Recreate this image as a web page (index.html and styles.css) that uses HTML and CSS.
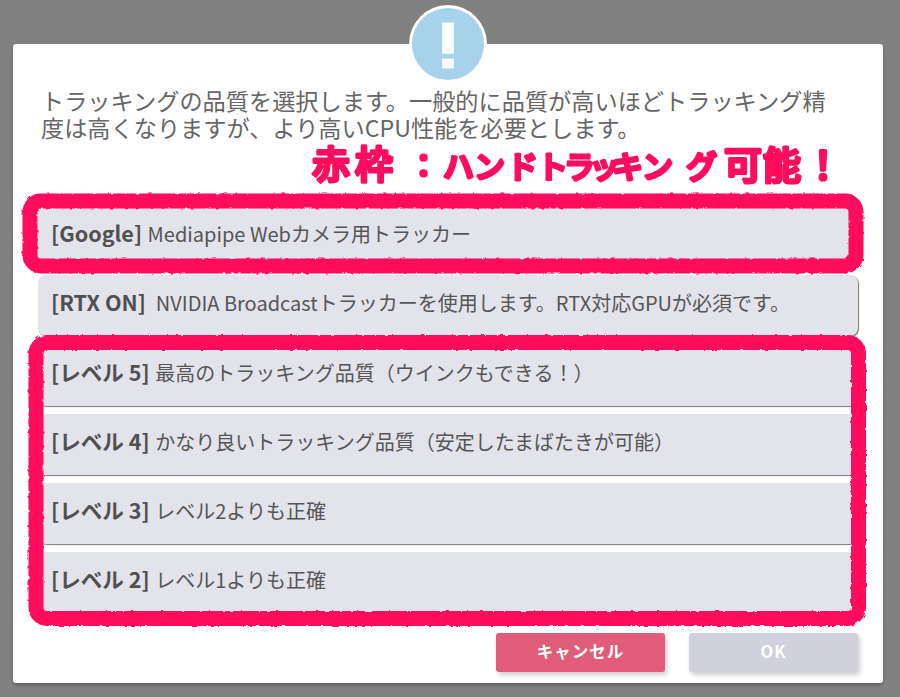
FILE: index.html
```html
<!DOCTYPE html>
<html lang="ja">
<head>
<meta charset="utf-8">
<title>トラッキング品質</title>
<link rel="stylesheet" href="styles.css">
</head>
<body>
<main class="dialog">
  <div class="badge"><svg class="badge-icon" viewBox="0 0 80 80" aria-hidden="true"><circle cx="40" cy="40" r="37" fill="#a6d2ec"/><rect x="34" y="18" width="12" height="32" fill="#fff"/><rect x="34" y="55" width="12" height="10" fill="#fff"/></svg></div>
  <p class="message">トラッキングの品質を選択します。一般的に品質が高いほどトラッキング精度は高くなりますが、より高いCPU性能を必要とします。</p>
  <div class="options">
    <div class="option"><b>[Google]</b> Mediapipe Webカメラ用トラッカー</div>
    <div class="option"><b>[RTX ON]</b>&nbsp; NVIDIA Broadcastトラッカーを使用します。RTX対応GPUが必須です。</div>
    <div class="option"><b>[レベル 5]</b> 最高のトラッキング品質（ウインクもできる！）</div>
    <div class="option"><b>[レベル 4]</b> かなり良いトラッキング品質（安定したまばたきが可能）</div>
    <div class="option"><b>[レベル 3]</b> レベル2よりも正確</div>
    <div class="option"><b>[レベル 2]</b> レベル1よりも正確</div>
  </div>
  <div class="actions">
    <button class="btn btn-cancel">キャンセル</button>
    <button class="btn btn-ok">OK</button>
  </div>
</main>
<svg class="marks" width="900" height="697" viewBox="0 0 900 697" aria-hidden="true">
  <defs>
    <filter id="rough" x="-5%" y="-5%" width="110%" height="110%">
      <feTurbulence type="fractalNoise" baseFrequency="0.2" numOctaves="2" seed="4" result="n"/>
      <feDisplacementMap in="SourceGraphic" in2="n" scale="3"/>
      <feGaussianBlur stdDeviation="0.6"/>
    </filter>
    <filter id="soft"><feGaussianBlur stdDeviation="0.6"/></filter>
  </defs>
  <g class="frames" filter="url(#rough)">
    <rect x="30" y="201" width="826" height="65" rx="11"/>
    <rect x="36" y="342.5" width="822.5" height="276" rx="11"/>
  </g>
  <g filter="url(#soft)">
    <text class="note-big" x="312 355" y="178">赤枠</text>
    <text class="note-kana" x="408" y="177">：</text>
    <text class="note-kana" x="443 474 507 537 564 589 612 642 686" y="178">ハンドトラッキング</text>
    <text class="note-big" x="724 763 804" y="179">可能！</text>
  </g>
</svg>
</body>
</html>
```
FILE: styles.css
```css
* { box-sizing: border-box; }
html, body { margin: 0; height: 697px; overflow: hidden; }
body {
  background: #808080;
  padding: 44px 17px 14px 13px;
  font-family: "Noto Sans CJK JP", "Noto Sans", sans-serif;
  position: relative;
}
.dialog {
  position: relative;
  height: 639px;
  background: #fff;
  border-radius: 3px;
  box-shadow: 0 2px 3px rgba(0,0,0,.25);
  padding: 43px 25px 0;
}
.badge {
  position: absolute;
  left: 396px;
  top: -39px;
  width: 78px;
  height: 78px;
  border-radius: 50%;
  background: #fff;
}
.badge-icon { display: block; width: 78px; height: 78px; }
.message {
  margin: 0 0 0 3px;
  width: 800px;
  font-size: 23.2px;
  line-height: 27px;
  color: #666;
}
.options {
  margin-top: 65px;
  display: flex;
  flex-direction: column;
  gap: 8.3px;
}
.option {
  height: 61px;
  background: #e3e3ec;
  border-radius: 8px;
  box-shadow: 1px 1px 1px #777;
  padding: 13px 13px 0;
  font-size: 20px;
  line-height: 30px;
  color: #555;
  white-space: nowrap;
}
.option b { font-weight: 700; font-size: 21.6px; line-height: 1; margin-right: 1px; color: #505050; }
.actions {
  position: relative;
  margin-top: 19.5px;
  display: flex;
  justify-content: flex-end;
  gap: 24px;
}
.btn {
  width: 169px;
  height: 39px;
  border: 0;
  border-radius: 3px;
  padding: 0 0 2px;
  font: 700 16.5px "Noto Sans CJK JP", sans-serif;
  letter-spacing: 1px;
  color: #fff;
  box-shadow: 2px 3px 5px rgba(0,0,0,.2);
}
.btn-cancel { background: #e05c7a; }
.btn-ok { background: #d0d1dc; }
.marks { position: absolute; left: 0; top: 0; pointer-events: none; }
.frames rect { fill: none; stroke: #ff0a5c; stroke-width: 15; }
.marks text {
  font-family: "Noto Sans CJK JP", sans-serif;
  font-weight: 500;
  fill: #ff0a5c;
  stroke: #ff0a5c;
  stroke-width: 3.2;
  stroke-linejoin: round;
  stroke-linecap: round;
}
.note-big { font-size: 38px; }
.note-kana { font-size: 31px; }
```
